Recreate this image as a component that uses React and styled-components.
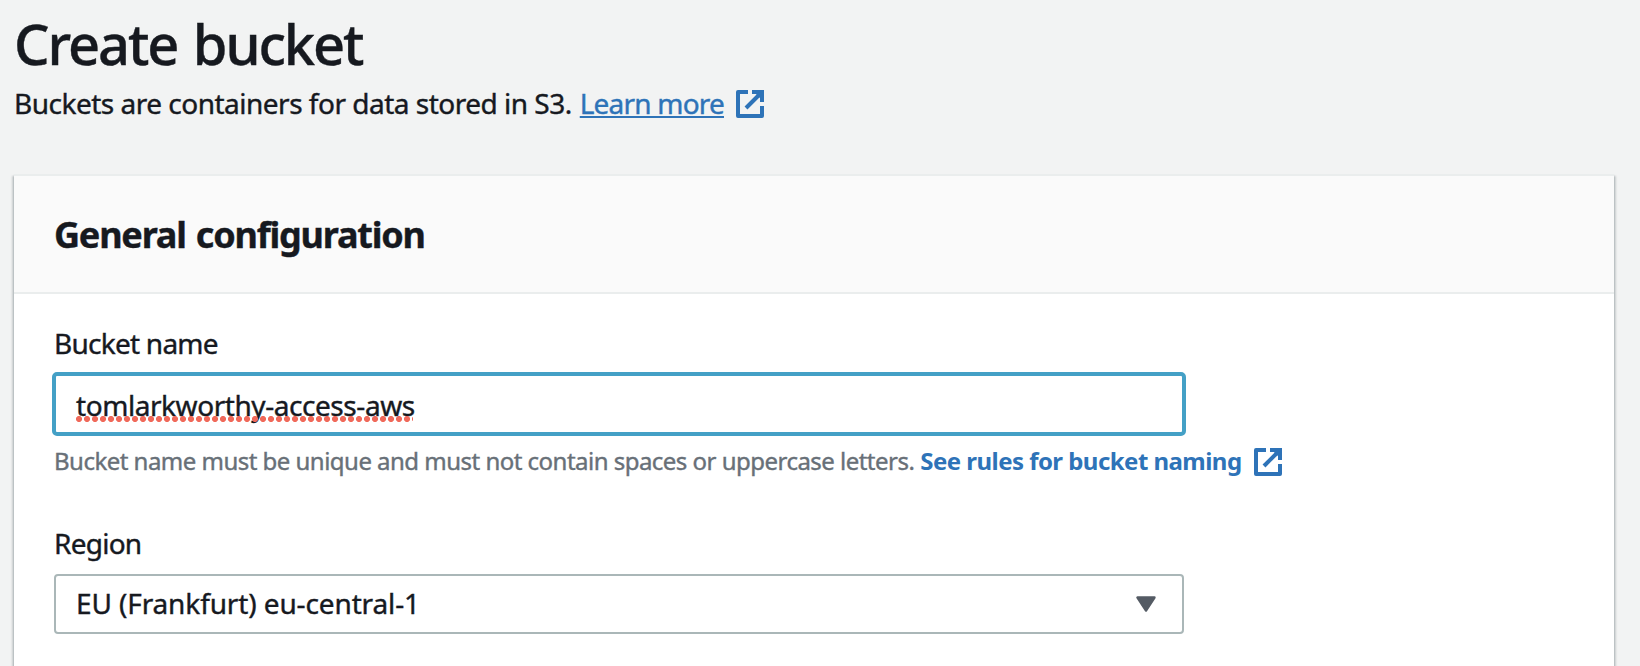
import React from "react";
import styled, { createGlobalStyle } from "styled-components";

const GlobalStyle = createGlobalStyle`
  *, *::before, *::after { box-sizing: border-box; }
  html, body { margin: 0; padding: 0; background: #f2f3f3; }
  body {
    height: 666px;
    overflow: hidden;
    color: #16191f;
    font-family: "Noto Sans", "Open Sans", sans-serif;
    font-size: 28px;
    -webkit-font-smoothing: antialiased;
    -webkit-text-stroke: 0.4px currentColor;
  }
`;

const Page = styled.main`
  display: flex;
  flex-direction: column;
  height: 666px;
  padding: 7px 26px 0 14px;
  overflow: hidden;
  white-space: nowrap;
`;

const Title = styled.h1`
  margin: 0;
  font-size: 56px;
  font-weight: 500;
  line-height: 72px;
  letter-spacing: -2.1px;
  word-spacing: 3px;
`;

const Description = styled.p`
  display: flex;
  align-items: center;
  height: 44px;
  margin: 2px 0 49px;
  line-height: 44px;
  letter-spacing: -0.5px;
`;

const Link = styled.a`
  display: inline-flex;
  align-items: center;
  margin-left: ${(p) => p.$gap}px;
  color: #2e73b8;
  font-weight: ${(p) => (p.$bold ? 700 : 400)};
  -webkit-text-stroke-width: ${(p) => (p.$bold ? 0 : 0.4)}px;
  text-decoration: none;
  cursor: pointer;
`;

const LinkText = styled.span`
  letter-spacing: ${(p) => p.$spacing}px;
  text-decoration: ${(p) => (p.$underline ? "underline" : "none")};
  text-decoration-thickness: 2px;
  text-underline-offset: 2px;
  text-decoration-skip-ink: none;
`;

const Icon = styled.svg`
  flex: none;
  width: 28px;
  height: 28px;
  margin: 2px 0 0 12px;
`;

const Card = styled.section`
  flex: none;
  height: 560px;
  border-top: 2px solid #eaeded;
  background: #fff;
  box-shadow: 0 2px 2px rgba(0, 28, 36, 0.3), 2px 2px 2px rgba(0, 28, 36, 0.15),
    -2px 2px 2px rgba(0, 28, 36, 0.15);
`;

const CardHeader = styled.header`
  display: flex;
  align-items: center;
  height: 118px;
  padding: 2px 40px 0;
  border-bottom: 2px solid #eaeded;
  background: #fafafa;
`;

const CardTitle = styled.h2`
  margin: 0;
  font-size: 36px;
  font-weight: 700;
  line-height: 44px;
  letter-spacing: -1.2px;
  word-spacing: 2px;
`;

const CardBody = styled.div`
  display: flex;
  flex-direction: column;
  gap: 40px;
  padding: 29px 40px 0;
`;

const Field = styled.div`
  display: flex;
  flex-direction: column;
`;

const Label = styled.label`
  line-height: 40px;
  letter-spacing: -0.75px;
`;

const TextInput = styled.div`
  width: 1134px;
  height: 64px;
  margin: 9px 0 0 -2px;
  padding: 2px 20px 0;
  border: 4px solid #44a0c6;
  border-radius: 5px;
  line-height: 54px;
`;

const Misspelled = styled.span`
  position: relative;
  display: inline-block;
  letter-spacing: -0.44px;

  &::after {
    content: "";
    position: absolute;
    left: 0;
    right: 2px;
    top: 38px;
    height: 6px;
    background: radial-gradient(circle at 3px 3px, #f0695a 2.6px, rgba(240, 105, 90, 0) 3.5px) 0 0 / 8px 6px;
  }
`;

const Hint = styled.div`
  display: flex;
  align-items: center;
  height: 44px;
  margin-top: 3px;
  color: #687078;
  font-size: 24px;
  line-height: 44px;
  letter-spacing: -0.52px;
`;

const Select = styled.div`
  display: flex;
  align-items: center;
  justify-content: space-between;
  width: 1130px;
  height: 60px;
  margin-top: 11px;
  padding: 0 26px 0 20px;
  border: 2px solid #aab7b8;
  border-radius: 4px;
`;

const SelectValue = styled.span`
  margin-top: -2px;
  line-height: 40px;
  letter-spacing: -0.12px;
`;

const Caret = styled.svg`
  width: 20px;
  height: 16px;
`;

const ExternalIcon = () => (
  <Icon viewBox="0 0 28 28" fill="none" stroke="#2e73b8" strokeWidth="4">
    <path d="M12 2H2V26H26V16" strokeLinejoin="round" />
    <path d="M16 2H26V12" />
    <path d="M25 3L10 18" />
    <path d="M19 3H25V9Z" fill="#2e73b8" stroke="none" />
  </Icon>
);

export default function App() {
  return (
    <>
      <GlobalStyle />
      <Page>
        <Title>Create bucket</Title>
        <Description>
          <span>Buckets are containers for data stored in S3.</span>
          <Link $gap={8}>
            <LinkText $underline $spacing={-0.8}>Learn more</LinkText>
            <ExternalIcon />
          </Link>
        </Description>
        <Card>
          <CardHeader>
            <CardTitle>General configuration</CardTitle>
          </CardHeader>
          <CardBody>
            <Field>
              <Label>Bucket name</Label>
              <TextInput>
                <Misspelled>tomlarkworthy-access-aws</Misspelled>
              </TextInput>
              <Hint>
                <span>Bucket name must be unique and must not contain spaces or uppercase letters.</span>
                <Link $bold $gap={6}>
                  <LinkText $spacing={-0.54}>See rules for bucket naming</LinkText>
                  <ExternalIcon />
                </Link>
              </Hint>
            </Field>
            <Field>
              <Label>Region</Label>
              <Select>
                <SelectValue>EU (Frankfurt) eu-central-1</SelectValue>
                <Caret viewBox="0 0 20 16">
                  <path d="M1.5 1.5H18.5L10 14.5Z" fill="#545b64" stroke="#545b64" strokeWidth="2.4" strokeLinejoin="round" />
                </Caret>
              </Select>
            </Field>
          </CardBody>
        </Card>
      </Page>
    </>
  );
}
